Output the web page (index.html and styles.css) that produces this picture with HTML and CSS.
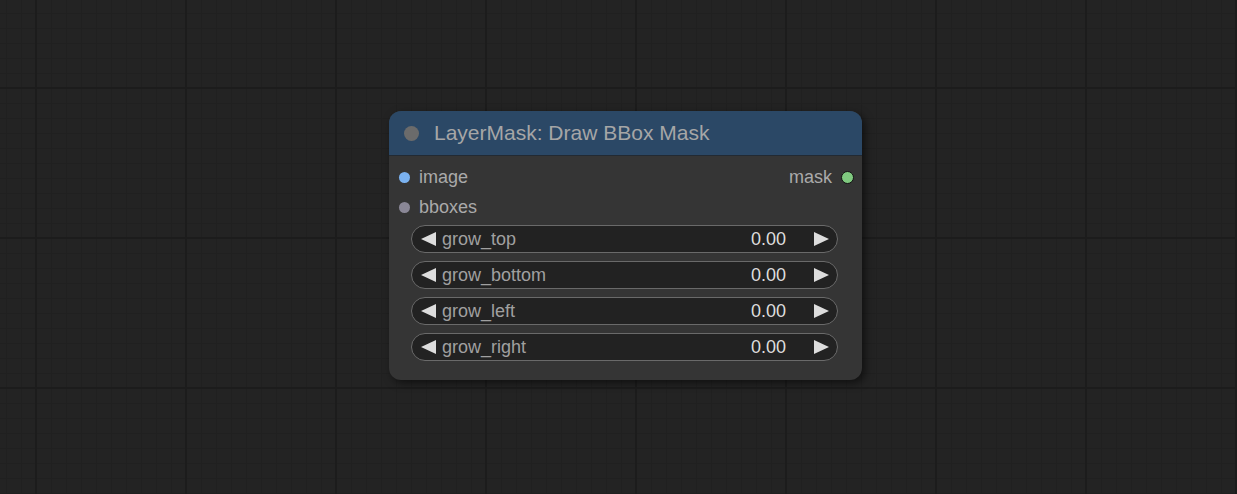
FILE: index.html
```html
<!DOCTYPE html>
<html>
<head>
<meta charset="utf-8">
<link rel="stylesheet" href="styles.css">
</head>
<body>
<div class="canvas">
  <div class="node">
    <div class="title">
      <span class="title-dot"></span>
      <span class="title-text">LayerMask: Draw BBox Mask</span>
    </div>
    <div class="body">
      <div class="slot-row">
        <div class="slot in"><span class="dot blue"></span><span>image</span></div>
        <div class="slot out"><span>mask</span><span class="dot green"></span></div>
      </div>
      <div class="slot-row">
        <div class="slot in"><span class="dot gray"></span><span>bboxes</span></div>
      </div>
      <div class="widgets">
        <div class="widget"><span class="arrow left"></span><span class="label">grow_top</span><span class="value">0.00</span><span class="arrow right"></span></div>
        <div class="widget"><span class="arrow left"></span><span class="label">grow_bottom</span><span class="value">0.00</span><span class="arrow right"></span></div>
        <div class="widget"><span class="arrow left"></span><span class="label">grow_left</span><span class="value">0.00</span><span class="arrow right"></span></div>
        <div class="widget"><span class="arrow left"></span><span class="label">grow_right</span><span class="value">0.00</span><span class="arrow right"></span></div>
      </div>
    </div>
  </div>
</div>
</body>
</html>
```

FILE: styles.css
```css
html, body {
  margin: 0;
  padding: 0;
}
body {
  width: 1237px;
  height: 494px;
  overflow: hidden;
  font-family: "Liberation Sans", Arial, sans-serif;
}
.canvas {
  position: relative;
  width: 1237px;
  height: 494px;
  background-color: #232323;
  background-image:
    linear-gradient(to right, #1c1c1c 0 2px, transparent 2px),
    linear-gradient(to bottom, #1c1c1c 0 2px, transparent 2px),
    linear-gradient(to right, #202020 0 1px, transparent 1px),
    linear-gradient(to bottom, #202020 0 1px, transparent 1px);
  background-size: 150px 150px, 150px 150px, 15px 15px, 15px 15px;
  background-position: 35px 0, 0 87px, 6px 0, 0 13px;
}
.node {
  position: absolute;
  left: 389px;
  top: 111px;
  width: 473px;
  height: 269px;
  background: #353535;
  border-radius: 12px;
  box-shadow: 3px 3px 8px rgba(0, 0, 0, 0.55);
  display: flex;
  flex-direction: column;
  overflow: hidden;
}
.title {
  height: 44px;
  background: #2b4866;
  border-bottom: 1px solid #222a33;
  display: flex;
  align-items: center;
  padding-left: 15px;
  flex-shrink: 0;
}
.title-dot {
  width: 15px;
  height: 15px;
  border-radius: 50%;
  background: #6b6b6b;
  margin-right: 15px;
}
.title-text {
  color: #a6a6a6;
  font-size: 21px;
  line-height: 44px;
}
.body {
  padding: 6px 24px 19px 22px;
  display: flex;
  flex-direction: column;
}
.slot-row {
  height: 30px;
  display: flex;
  justify-content: space-between;
  align-items: center;
  margin-left: -22px;
  margin-right: -24px;
}
.slot {
  display: flex;
  align-items: center;
  color: #aaaaaa;
  font-size: 18px;
}
.slot.in {
  padding-left: 10px;
}
.slot.in .dot {
  margin-right: 9px;
}
.slot.out {
  padding-right: 8px;
}
.slot.out .dot {
  margin-left: 9px;
}
.dot {
  width: 11px;
  height: 11px;
  border-radius: 50%;
  box-sizing: border-box;
}
.dot.blue { background: #7bb2f0; }
.dot.gray { background: #8a8796; }
.dot.green {
  background: #7fc97f;
  border: 1.5px solid #111;
  width: 13px;
  height: 13px;
}
.widgets {
  margin-top: 3px;
  display: flex;
  flex-direction: column;
  gap: 8px;
}
.widget {
  height: 28px;
  box-sizing: border-box;
  border: 1px solid #6a6a6a;
  border-radius: 14px;
  background: #222222;
  display: flex;
  align-items: center;
  padding: 0 8px 0 9px;
  font-size: 18px;
}
.arrow {
  width: 0;
  height: 0;
  border-top: 7px solid transparent;
  border-bottom: 7px solid transparent;
}
.arrow.left {
  border-right: 15px solid #dddddd;
}
.arrow.right {
  border-left: 15px solid #dddddd;
}
.label {
  color: #a0a0a0;
  margin-left: 6px;
  flex: 1;
}
.value {
  color: #dddddd;
  margin-right: 28px;
}
```
